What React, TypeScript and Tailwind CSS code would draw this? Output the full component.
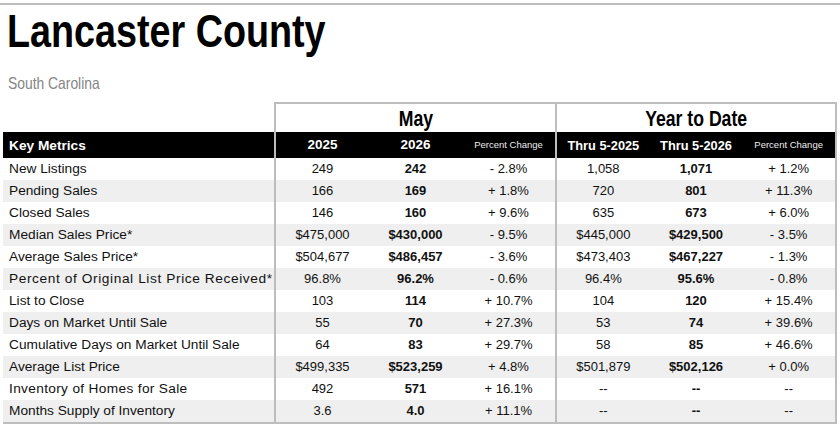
import React from "react";

const rows: string[][] = [
  ["New Listings", "249", "242", "- 2.8%", "1,058", "1,071", "+ 1.2%"],
  ["Pending Sales", "166", "169", "+ 1.8%", "720", "801", "+ 11.3%"],
  ["Closed Sales", "146", "160", "+ 9.6%", "635", "673", "+ 6.0%"],
  ["Median Sales Price*", "$475,000", "$430,000", "- 9.5%", "$445,000", "$429,500", "- 3.5%"],
  ["Average Sales Price*", "$504,677", "$486,457", "- 3.6%", "$473,403", "$467,227", "- 1.3%"],
  ["Percent of Original List Price Received*", "96.8%", "96.2%", "- 0.6%", "96.4%", "95.6%", "- 0.8%"],
  ["List to Close", "103", "114", "+ 10.7%", "104", "120", "+ 15.4%"],
  ["Days on Market Until Sale", "55", "70", "+ 27.3%", "53", "74", "+ 39.6%"],
  ["Cumulative Days on Market Until Sale", "64", "83", "+ 29.7%", "58", "85", "+ 46.6%"],
  ["Average List Price", "$499,335", "$523,259", "+ 4.8%", "$501,879", "$502,126", "+ 0.0%"],
  ["Inventory of Homes for Sale", "492", "571", "+ 16.1%", "--", "--", "--"],
  ["Months Supply of Inventory", "3.6", "4.0", "+ 11.1%", "--", "--", "--"],
];

const labelTracking: Record<number, string> = {
  5: "tracking-[0.6px]",
  10: "tracking-[0.33px]",
};

export default function App() {
  return (
    <div
      className="w-[840px] h-[427px] bg-white overflow-hidden text-[#111]"
      style={{ fontFamily: '"Liberation Sans", Arial, Helvetica, sans-serif' }}
    >
      <div className="h-[2px] mt-[3px] bg-[#bdbdbd]" />
      <div className="mt-[4px] pl-[7px] h-[45px]">
        <span className="inline-block origin-left scale-x-[0.82] text-[46px] leading-[45px] font-bold text-black whitespace-nowrap">
          Lancaster County
        </span>
      </div>
      <div className="mt-[18px] pl-[8px] h-[20px]">
        <span className="inline-block origin-left scale-x-[0.84] text-[16.5px] leading-[20px] text-[#858585] whitespace-nowrap">
          South Carolina
        </span>
      </div>

      <div className="mt-[10px] ml-[3px] w-[834px]">
        {/* top section header */}
        <div className="flex h-[30px]">
          <div className="w-[271px]" />
          <div className="w-[281px] border-l-2 border-t-2 border-[#bdbdbd] flex items-center justify-center pt-[3px]">
            <span className="inline-block scale-x-[0.82] text-[21.5px] font-bold text-black">May</span>
          </div>
          <div className="w-[282px] border-l-2 border-t-2 border-r-2 border-[#bdbdbd] flex items-center justify-center pt-[3px]">
            <span className="inline-block scale-x-[0.82] text-[21.5px] font-bold text-black whitespace-nowrap">
              Year to Date
            </span>
          </div>
        </div>

        {/* black header */}
        <div className="flex h-[26px] bg-black text-white">
          <div className="w-[271px] pl-[6px] pt-[1px] text-[13.7px] leading-[25px] font-bold">Key Metrics</div>
          <div className="w-[281px] border-l-2 border-[#bdbdbd] grid grid-cols-3 items-center text-center pt-[1px]">
            <div className="text-[13.5px] font-bold">2025</div>
            <div className="text-[13.5px] font-bold">2026</div>
            <div className="text-[9.5px] text-[#eeeeee]">Percent Change</div>
          </div>
          <div className="w-[282px] border-l-2 border-r-2 border-[#bdbdbd] grid grid-cols-3 items-center text-center pt-[1px]">
            <div className="text-[12.8px] font-bold">Thru 5-2025</div>
            <div className="text-[12.8px] font-bold">Thru 5-2026</div>
            <div className="text-[9.5px] text-[#eeeeee]">Percent Change</div>
          </div>
        </div>

        {/* data rows */}
        <div className="border-b-2 border-[#bdbdbd]">
          {rows.map((r, i) => (
            <div key={i} className={`flex h-[22px] leading-[22px] ${i % 2 === 1 ? "bg-[#efefef]" : "bg-white"}`}>
              <div className={`w-[271px] pl-[6px] text-[13.7px] whitespace-nowrap ${labelTracking[i] ?? ""}`}>{r[0]}</div>
              <div className="w-[281px] border-l-2 border-[#bdbdbd] grid grid-cols-3 text-center text-[13px]">
                <div>{r[1]}</div>
                <div className="font-bold">{r[2]}</div>
                <div>{r[3]}</div>
              </div>
              <div className="w-[282px] border-l-2 border-r-2 border-[#bdbdbd] grid grid-cols-3 text-center text-[13px]">
                <div>{r[4]}</div>
                <div className="font-bold">{r[5]}</div>
                <div>{r[6]}</div>
              </div>
            </div>
          ))}
        </div>
      </div>
    </div>
  );
}
